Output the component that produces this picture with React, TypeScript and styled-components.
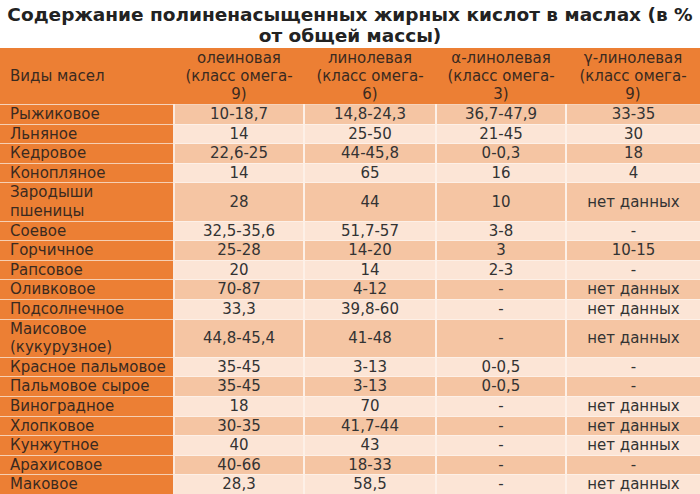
import React from 'react';
import styled, { createGlobalStyle } from 'styled-components';

const GlobalStyle = createGlobalStyle`
  html, body {
    margin: 0;
    padding: 0;
    background: #fff;
  }
  body {
    font-family: "DejaVu Sans", Verdana, sans-serif;
    color: #333;
  }
`;

const Page = styled.div`
  width: 700px;
  height: 494px;
  overflow: hidden;
`;

const Title = styled.h1`
  margin: 0;
  height: 48px;
  padding-top: 4px;
  box-sizing: border-box;
  font-size: 18.5px;
  line-height: 21px;
  font-weight: bold;
  color: #222;
  text-align: center;

  span {
    display: block;
    white-space: nowrap;
  }
`;

const Table = styled.table`
  width: 700px;
  table-layout: fixed;
  border-collapse: collapse;
  font-size: 15px;
`;

const Col = styled.col<{ $w: number }>`
  width: ${(p) => p.$w}px;
`;

const HeadCell = styled.th<{ $first?: boolean }>`
  background: #ec7f34;
  font-weight: normal;
  color: #3a2a20;
  height: 56px;
  padding: 0;
  line-height: 18px;
  text-align: ${(p) => (p.$first ? 'left' : 'center')};
  padding-left: ${(p) => (p.$first ? '10px' : '0')};
  vertical-align: middle;
  border-bottom: 1px solid #f6d3bb;

  span {
    display: block;
    white-space: nowrap;
  }
`;

const NameCell = styled.td`
  background: #ec7f34;
  color: #3a2a20;
  padding: 0 0 0 10px;
  line-height: 18.6px;
  text-align: left;
  vertical-align: middle;
  border-bottom: 1px solid #f6cfb2;
  border-right: 2px solid #fbe9dd;
  white-space: nowrap;
`;

const ValueCell = styled.td<{ $dark: boolean }>`
  background: ${(p) => (p.$dark ? '#f5c5a3' : '#fce5d6')};
  color: #333;
  padding: 0;
  line-height: 18.6px;
  text-align: center;
  vertical-align: middle;
  border-bottom: 1px solid #fdf0e7;
  border-right: 2px solid #fdf0e7;
  white-space: nowrap;

  &:last-child {
    border-right: none;
  }
`;

const colWidths = [174, 130, 132, 130, 134];

const headers = [
  ['олеиновая', '(класс омега-', '9)'],
  ['линолевая', '(класс омега-', '6)'],
  ['α-линолевая', '(класс омега-', '3)'],
  ['γ-линолевая', '(класс омега-', '9)'],
];

const rows: [string[], string[]][] = [
  [['Рыжиковое'], ['10-18,7', '14,8-24,3', '36,7-47,9', '33-35']],
  [['Льняное'], ['14', '25-50', '21-45', '30']],
  [['Кедровое'], ['22,6-25', '44-45,8', '0-0,3', '18']],
  [['Конопляное'], ['14', '65', '16', '4']],
  [['Зародыши', 'пшеницы'], ['28', '44', '10', 'нет данных']],
  [['Соевое'], ['32,5-35,6', '51,7-57', '3-8', '-']],
  [['Горчичное'], ['25-28', '14-20', '3', '10-15']],
  [['Рапсовое'], ['20', '14', '2-3', '-']],
  [['Оливковое'], ['70-87', '4-12', '-', 'нет данных']],
  [['Подсолнечное'], ['33,3', '39,8-60', '-', 'нет данных']],
  [['Маисовое', '(кукурузное)'], ['44,8-45,4', '41-48', '-', 'нет данных']],
  [['Красное пальмовое'], ['35-45', '3-13', '0-0,5', '-']],
  [['Пальмовое сырое'], ['35-45', '3-13', '0-0,5', '-']],
  [['Виноградное'], ['18', '70', '-', 'нет данных']],
  [['Хлопковое'], ['30-35', '41,7-44', '-', 'нет данных']],
  [['Кунжутное'], ['40', '43', '-', 'нет данных']],
  [['Арахисовое'], ['40-66', '18-33', '-', '-']],
  [['Маковое'], ['28,3', '58,5', '-', 'нет данных']],
];

export default function App() {
  return (
    <Page>
      <GlobalStyle />
      <Title>
        <span>Содержание полиненасыщенных жирных кислот в маслах (в %</span>
        <span>от общей массы)</span>
      </Title>
      <Table>
        <colgroup>
          {colWidths.map((w, i) => (
            <Col key={i} $w={w} />
          ))}
        </colgroup>
        <thead>
          <tr>
            <HeadCell $first>Виды масел</HeadCell>
            {headers.map((h, i) => (
              <HeadCell key={i}>
                {h.map((line) => (
                  <span key={line}>{line}</span>
                ))}
              </HeadCell>
            ))}
          </tr>
        </thead>
        <tbody>
          {rows.map(([name, values], i) => (
            <tr key={i}>
              <NameCell>
                {name.map((n, j) => (
                  <div key={j}>{n}</div>
                ))}
              </NameCell>
              {values.map((v, j) => (
                <ValueCell key={j} $dark={i % 2 === 0}>
                  {v}
                </ValueCell>
              ))}
            </tr>
          ))}
        </tbody>
      </Table>
    </Page>
  );
}
